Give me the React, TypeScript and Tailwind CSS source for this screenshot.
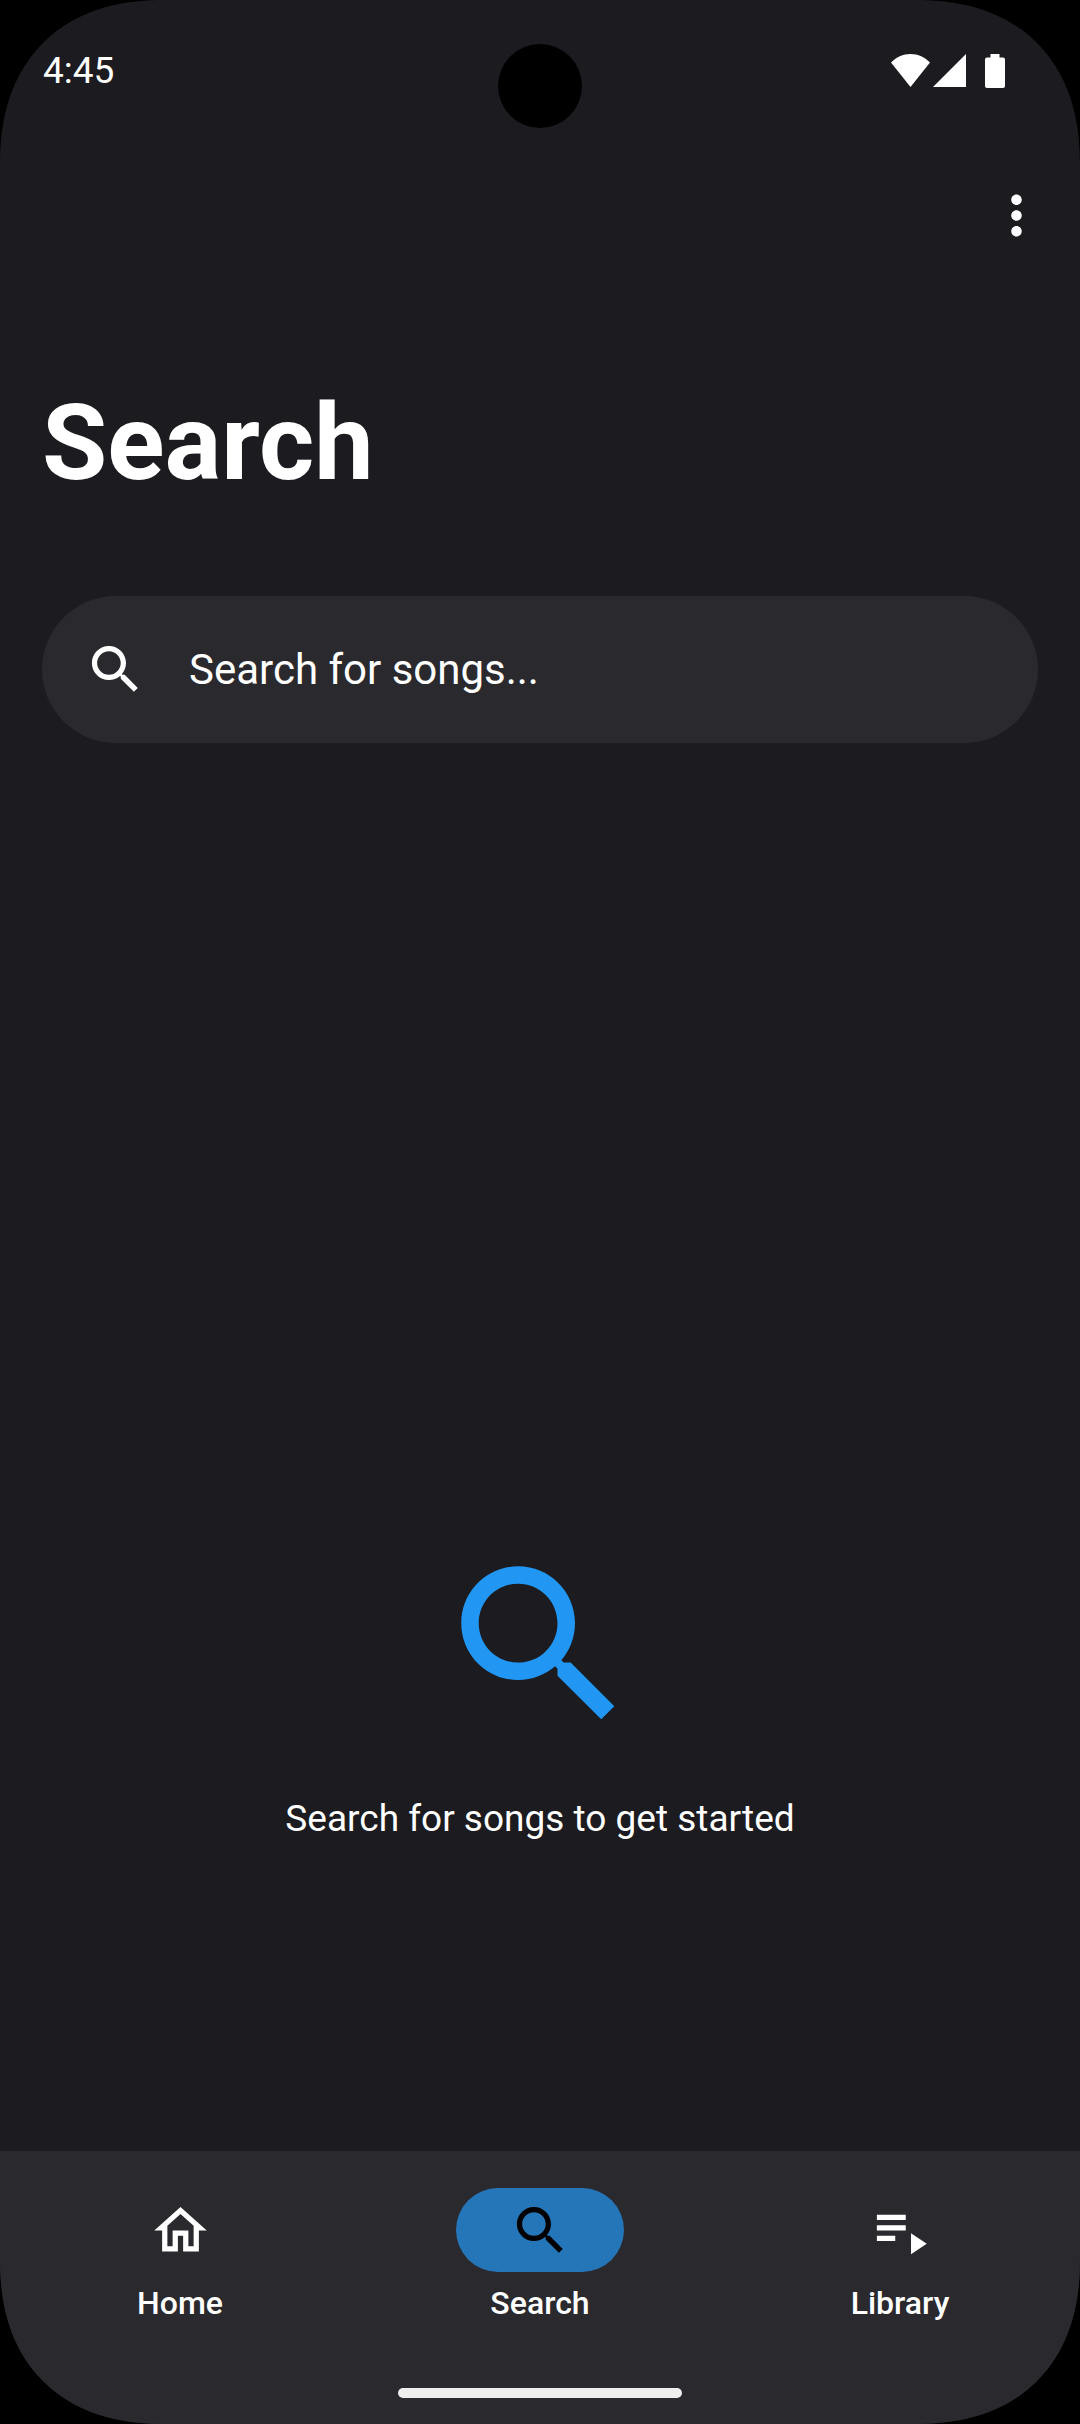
import React from "react";

const SEARCH_PATH =
  "M15.5 14h-.79l-.28-.27C15.41 12.59 16 11.11 16 9.5 16 5.91 13.09 3 9.5 3S3 5.91 3 9.5 5.91 16 9.5 16c1.61 0 3.09-.59 4.23-1.57l.27.28v.79l5 4.99L20.49 19l-4.99-5zm-6 0C7.01 14 5 11.99 5 9.5S7.01 5 9.5 5 14 7.01 14 9.5 11.99 14 9.5 14z";
const HOME_PATH =
  "M12 5.69l5 4.5V18h-2v-6H9v6H7v-7.81l5-4.5M12 3L2 12h3v8h6v-6h2v6h6v-8h3L12 3z";
const LIBRARY_PATH = "M3 6h11v2H3zM3 10h11v2H3zM3 14h7v2H3zM16 13v8l6-4z";
const MORE_PATH =
  "M12 8c1.1 0 2-.9 2-2s-.9-2-2-2-2 .9-2 2 .9 2 2 2zm0 2c-1.1 0-2 .9-2 2s.9 2 2 2 2-.9 2-2-.9-2-2-2zm0 6c-1.1 0-2 .9-2 2s.9 2 2 2 2-.9 2-2-.9-2-2-2z";

function Icon({ path, className }: { path: string; className: string }) {
  return (
    <svg viewBox="0 0 24 24" fill="currentColor" aria-hidden="true" className={className}>
      <path d={path} />
    </svg>
  );
}

function StatusBar() {
  return (
    <div className="relative flex h-[142px] items-start justify-between pt-[49px] pr-[75px] pl-[43px]">
      <span className="text-[37px] leading-[43px]">4:45</span>
      <div className="absolute top-[44px] left-1/2 size-[84px] -translate-x-1/2 rounded-full bg-black" />
      <div className="flex items-start pt-[5px]" aria-hidden="true">
        <svg viewBox="0 0 39 33" fill="currentColor" className="h-[33px] w-[39px]">
          <path d="M19.500 33L0 8.500C5 3.300 12 0 19.500 0S34 3.300 39 8.500z" />
        </svg>
        <svg viewBox="0 0 33 33" fill="currentColor" className="ml-[3px] h-[33px] w-[33px]">
          <path d="M0 33L33 0V33z" />
        </svg>
        <svg viewBox="0 0 20 34" fill="currentColor" className="ml-[19px] h-[34px] w-[20px]">
          <path d="M5.500 0h9v3.500H18a2 2 0 0 1 2 2V32a2 2 0 0 1-2 2H2a2 2 0 0 1-2-2V5.500a2 2 0 0 1 2-2h3.500z" />
        </svg>
      </div>
    </div>
  );
}

const TABS = [
  { label: "Home", path: HOME_PATH, active: false },
  { label: "Search", path: SEARCH_PATH, active: true },
  { label: "Library", path: LIBRARY_PATH, active: false },
];

export default function App() {
  return (
    <div className="min-h-screen bg-black font-[Roboto,sans-serif] text-white">
      <div className="flex min-h-screen flex-col overflow-hidden rounded-[165px] bg-[#1c1b1f] [corner-shape:superellipse(1.2)]">
        <StatusBar />
        <header className="flex h-[147px] items-center justify-end pr-8">
          <button type="button" aria-label="More options">
            <Icon path={MORE_PATH} className="size-[63px]" />
          </button>
        </header>
        <main className="flex flex-1 flex-col px-[42px]">
          <h1 className="mt-[91px] mb-[90px] text-[106px] leading-[126px] font-bold">Search</h1>
          <label className="flex h-[147px] items-center gap-[42px] rounded-full bg-[#2a292d] px-[42px]">
            <Icon path={SEARCH_PATH} className="size-[63px] shrink-0" />
            <input
              type="text"
              aria-label="Search for songs"
              placeholder="Search for songs..."
              className="min-w-0 flex-1 bg-transparent text-[42px] leading-[63px] outline-none placeholder:text-white"
            />
          </label>
          <section className="flex flex-1 flex-col items-center justify-end gap-[42px] pb-[306px]">
            <Icon path={SEARCH_PATH} className="size-[210px] text-[#2196f3]" />
            <p className="text-[37px] leading-[53px]">Search for songs to get started</p>
          </section>
        </main>
        <nav className="bg-[#2a292d] pt-[37px] pb-[26px]">
          <div className="grid grid-cols-3">
            {TABS.map((tab) => (
              <button
                key={tab.label}
                type="button"
                aria-current={tab.active ? "page" : undefined}
                className="flex flex-col items-center gap-[10px]"
              >
                <span
                  className={
                    tab.active
                      ? "flex h-[84px] w-[168px] items-center justify-center rounded-full bg-[#2576b9] text-black"
                      : "flex h-[84px] w-[168px] items-center justify-center"
                  }
                >
                  <Icon path={tab.path} className="size-[63px]" />
                </span>
                <span className="text-[32px] leading-[42px] font-medium">{tab.label}</span>
              </button>
            ))}
          </div>
          <div className="mx-auto mt-[64px] h-[10px] w-[284px] rounded-full bg-[#eeeeee]" />
        </nav>
      </div>
    </div>
  );
}
